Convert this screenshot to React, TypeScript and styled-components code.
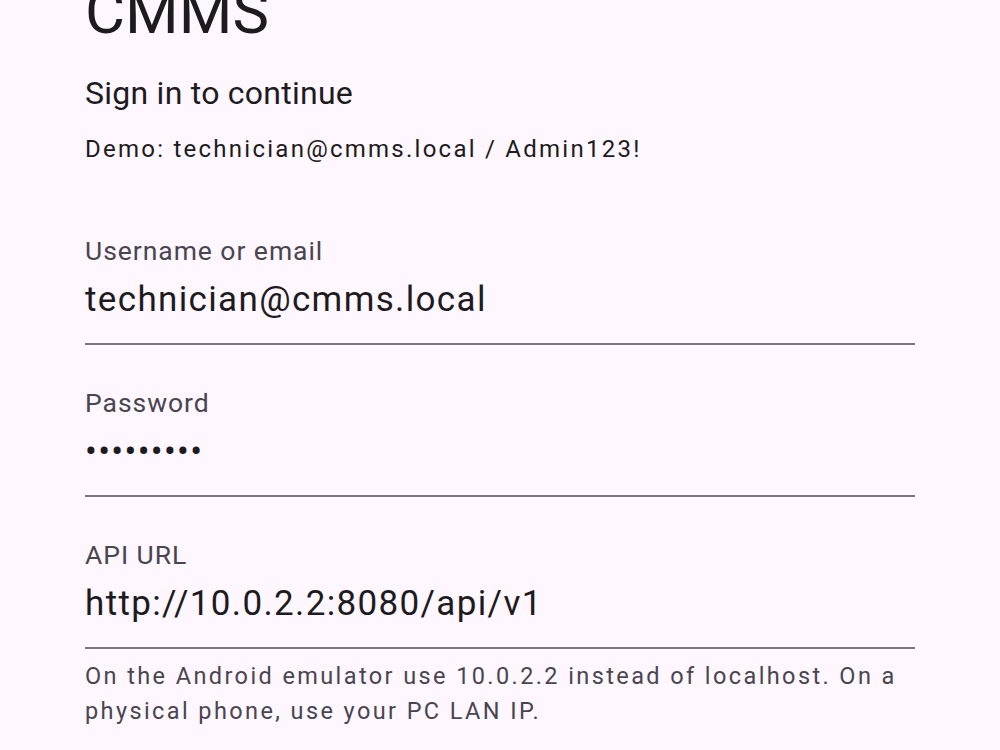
import React from "react";
import styled, { createGlobalStyle } from "styled-components";

const GlobalStyle = createGlobalStyle`
  html, body {
    margin: 0;
    padding: 0;
    background: #fef7ff;
    overflow: hidden;
  }
  body {
    font-family: Roboto, "Noto Sans", "Liberation Sans", sans-serif;
    color: #1d1b20;
  }
`;

const Screen = styled.div`
  width: 1000px;
  height: 750px;
  overflow: hidden;
  background: #fef7ff;
`;

const Form = styled.div`
  margin-top: -24px;
  padding: 0 85px;
  display: flex;
  flex-direction: column;
`;

const Title = styled.h1`
  margin: 0;
  font-size: 61.5px;
  line-height: 72px;
  font-weight: 400;
  letter-spacing: 0;
`;

const Subtitle = styled.div`
  margin-top: 25px;
  font-size: 32px;
  line-height: 40px;
  letter-spacing: 0.25px;
`;

const Hint = styled.div`
  margin-top: 19.5px;
  font-size: 24px;
  line-height: 32px;
  letter-spacing: 2.25px;
`;

const Field = styled.div<{ $first?: boolean }>`
  margin-top: ${(p) => (p.$first ? "69px" : "41px")};
  display: flex;
  flex-direction: column;
  border-bottom: 2px solid #79747e;
  padding-bottom: 21px;
`;

const Label = styled.label`
  font-size: 26.5px;
  line-height: 34px;
  letter-spacing: 0.95px;
  color: #49454f;
`;

const Value = styled.div`
  margin-top: 10px;
  font-size: 35px;
  line-height: 44px;
  letter-spacing: 1.35px;
  color: #1d1b20;
  white-space: nowrap;
`;

const Helper = styled.div`
  margin-top: 10px;
  font-size: 23.5px;
  line-height: 35px;
  letter-spacing: 2.4px;
  color: #49454f;
`;

export default function App() {
  return (
    <Screen>
      <GlobalStyle />
      <Form>
        <Title>CMMS</Title>
        <Subtitle>Sign in to continue</Subtitle>
        <Hint>Demo: technician@cmms.local / Admin123!</Hint>

        <Field $first>
          <Label>Username or email</Label>
          <Value>technician@cmms.local</Value>
        </Field>

        <Field>
          <Label>Password</Label>
          <Value>{"\u2022".repeat(9)}</Value>
        </Field>

        <Field>
          <Label>API URL</Label>
          <Value>http://10.0.2.2:8080/api/v1</Value>
        </Field>
        <Helper>
          On the Android emulator use 10.0.2.2 instead of localhost. On a
          physical phone, use your PC LAN IP.
        </Helper>
      </Form>
    </Screen>
  );
}
